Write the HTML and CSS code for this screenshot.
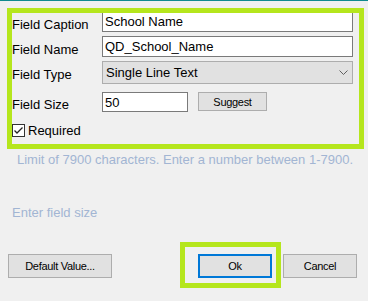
FILE: index.html
```html
<!DOCTYPE html>
<html>

<head>
    <meta charset="UTF-8">
    <meta name="viewport" content="width=device-width, initial-scale=1.0">
    <title>Field Properties</title>
    <link rel="stylesheet" href="styles.css">
</head>

<body>
    <div class="dialog">
        <div class="fields">
            <div class="row">
                <label for="caption">Field Caption</label>
                <input type="text" id="caption" class="text" value="School Name">
            </div>
            <div class="row">
                <label for="name">Field Name</label>
                <input type="text" id="name" class="text" value="QD_School_Name">
            </div>
            <div class="row">
                <label>Field Type</label>
                <div class="dropdown">
                    <span>Single Line Text</span>
                    <svg width="9" height="6" viewBox="0 0 9 6"><polyline points="0.5,0.5 4.5,4.5 8.5,0.5" fill="none" stroke="#606060" stroke-width="1"/></svg>
                </div>
            </div>
            <div class="row size-row">
                <label for="size">Field Size</label>
                <input type="text" id="size" class="text size" value="50">
                <button class="btn suggest">Suggest</button>
            </div>
            <div class="check-row">
                <svg class="check" width="13" height="13" viewBox="0 0 13 13"><rect x="0.5" y="0.5" width="12" height="12" fill="#fff" stroke="#333"/><polyline points="2.5,6.5 5,9 10.5,3.5" fill="none" stroke="#222" stroke-width="1.3"/></svg>
                <span>Required</span>
            </div>
        </div>

        <p class="hint">Limit of 7900 characters. Enter a number between 1-7900.</p>
        <p class="prompt">Enter field size</p>

        <div class="actions">
            <button class="btn">Default Value...</button>
            <button class="btn ok">Ok</button>
            <button class="btn">Cancel</button>
        </div>

        <!-- highlight marks -->
        <div class="mark mark-fields"></div>
        <div class="mark mark-ok"></div>
    </div>
</body>

</html>
```

FILE: styles.css
```css
body {
    margin: 0;
    background-color: #f0f0f0;
    font-family: 'Liberation Sans', Arial, sans-serif;
    font-size: 13px;
    color: #000;
}

.dialog {
    position: relative;
    height: 300px;
    border-top: 1px solid #108a8e;
    padding: 10px 11px 0 8px;
    box-sizing: border-box;
}

.fields {
    margin: 0 4px;
}

.row {
    display: flex;
    align-items: flex-start;
    margin-bottom: 4px;
}

.row label {
    width: 90px;
    flex: none;
    padding-top: 6px;
    line-height: 15px;
}

.text {
    flex: 1;
    height: 21px;
    box-sizing: border-box;
    margin: 0;
    padding: 0 2px;
    border: 1px solid #7a7a7a;
    background-color: #fff;
    font-family: inherit;
    font-size: 13px;
    color: #000;
    outline: none;
}

.dropdown {
    flex: 1;
    height: 23px;
    box-sizing: border-box;
    border: 1px solid #adadad;
    background-color: #e1e1e1;
    display: flex;
    align-items: center;
    justify-content: space-between;
    padding: 0 4px 0 3px;
    line-height: 15px;
}

.size-row {
    margin-top: 8px;
}

.size-row label {
    padding-top: 5px;
}

.text.size {
    flex: none;
    width: 86px;
    height: 20px;
}

.btn {
    height: 24px;
    box-sizing: border-box;
    margin: 0;
    padding: 0;
    border: 1px solid #adadad;
    background-color: #e1e1e1;
    font-family: 'Liberation Sans', Arial, sans-serif;
    font-size: 11px;
    letter-spacing: -0.3px;
    color: #000;
}

.suggest {
    width: 69px;
    height: 19px;
    margin-left: 10px;
}

.check-row {
    display: flex;
    align-items: center;
    gap: 3px;
    margin-top: 11px;
    line-height: 15px;
}

.check {
    display: block;
}

.hint {
    margin: 14px 0 0 9px;
    line-height: 15px;
    color: #a2b5d3;
}

.prompt {
    margin: 38px 0 0 4px;
    line-height: 15px;
    color: #a2b5d3;
}

.actions {
    display: flex;
    gap: 11px;
    margin-top: 34px;
}

.actions .btn {
    width: 74px;
}

.actions .btn:first-child {
    width: 104px;
}

.ok {
    margin-left: auto;
    border: 2px solid #0078d7;
}

.mark {
    position: absolute;
    border: 5px solid #b5e61d;
    box-sizing: border-box;
    pointer-events: none;
}

.mark-fields {
    left: 7px;
    top: 7px;
    width: 357px;
    height: 141px;
}

.mark-ok {
    left: 180px;
    top: 241px;
    width: 101px;
    height: 46px;
}
```
